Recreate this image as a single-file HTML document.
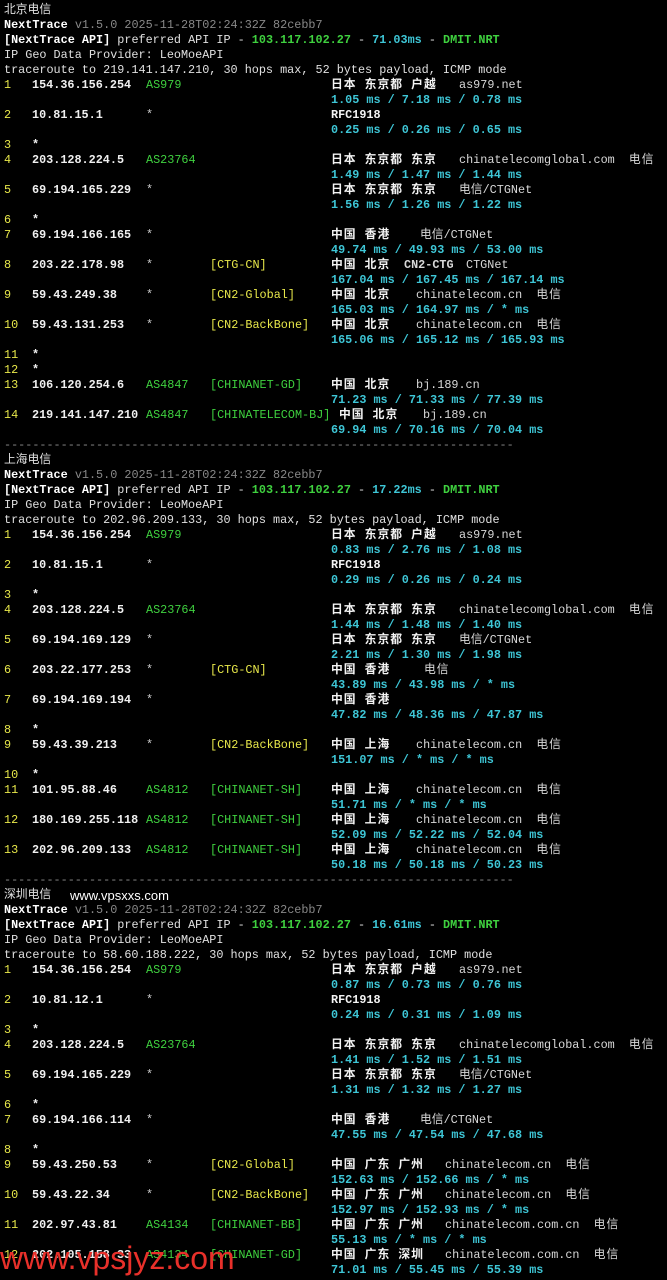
<!DOCTYPE html>
<html><head><meta charset="utf-8"><style>
html,body{margin:0;padding:0;background:#000;}
body{width:667px;height:1280px;position:relative;overflow:hidden;font-family:"Liberation Mono","Noto Sans CJK SC",monospace;font-size:11.8px;color:#e0e0e0;}
.l{position:absolute;left:0;height:15px;line-height:15px;white-space:pre;width:667px;margin-top:1px}
.l span{position:absolute;top:0;line-height:15px}
.l span span,.l span b{position:static}
.p{left:4px}
.n{left:4px;color:#e8e84a}
.i{left:32px;font-weight:bold;color:#f0f0f0}
.a{left:146px;color:#3fd13f}
.s{left:146px;color:#ccc}
.t{left:210px}
.y{color:#e8e84a}
.gr{color:#3fd13f}
.g{left:331px;font-weight:bold;color:#f4f4f4;letter-spacing:1px}
.r{left:331px;font-weight:bold;color:#f4f4f4}
.m{left:331px;font-weight:bold;color:#3ec6d6}
.d{color:#d8d8d8}
.cj{letter-spacing:1px}
.c{color:#3ec6d6}
.k{color:#3fd13f}
.v{color:#888}
b{color:#fff}
.wm{position:absolute;left:0;top:1240px;font-family:"Liberation Sans",sans-serif;font-size:32px;color:#e8302a;line-height:36px}
</style></head><body>
<div class="l" style="top:2px"><span class="p">北京电信</span></div>
<div class="l" style="top:17px"><span class="p"><b>NextTrace</b> <span class="v">v1.5.0 2025-11-28T02:24:32Z 82cebb7</span></span></div>
<div class="l" style="top:32px"><span class="p"><b>[NextTrace API]</b> preferred API IP - <b class="k">103.117.102.27</b> - <b class="c">71.03ms</b> - <b class="k">DMIT.NRT</b></span></div>
<div class="l" style="top:47px"><span class="p">IP Geo Data Provider: LeoMoeAPI</span></div>
<div class="l" style="top:62px"><span class="p">traceroute to 219.141.147.210, 30 hops max, 52 bytes payload, ICMP mode</span></div>
<div class="l" style="top:77px"><span class="n">1</span><span class="i">154.36.156.254</span><span class="a">AS979</span><span class="g">日本 东京都 户越</span><span class="d" style="left:459px">as979.net</span></div>
<div class="l" style="top:92px"><span class="m">1.05 ms / 7.18 ms / 0.78 ms</span></div>
<div class="l" style="top:107px"><span class="n">2</span><span class="i">10.81.15.1</span><span class="s">*</span><span class="r">RFC1918</span></div>
<div class="l" style="top:122px"><span class="m">0.25 ms / 0.26 ms / 0.65 ms</span></div>
<div class="l" style="top:137px"><span class="n">3</span><span class="i">*</span></div>
<div class="l" style="top:152px"><span class="n">4</span><span class="i">203.128.224.5</span><span class="a">AS23764</span><span class="g">日本 东京都 东京</span><span class="d" style="left:459px">chinatelecomglobal.com  <span class="cj">电信</span></span></div>
<div class="l" style="top:167px"><span class="m">1.49 ms / 1.47 ms / 1.44 ms</span></div>
<div class="l" style="top:182px"><span class="n">5</span><span class="i">69.194.165.229</span><span class="s">*</span><span class="g">日本 东京都 东京</span><span class="d" style="left:459px">电信/CTGNet</span></div>
<div class="l" style="top:197px"><span class="m">1.56 ms / 1.26 ms / 1.22 ms</span></div>
<div class="l" style="top:212px"><span class="n">6</span><span class="i">*</span></div>
<div class="l" style="top:227px"><span class="n">7</span><span class="i">69.194.166.165</span><span class="s">*</span><span class="g">中国 香港</span><span class="d" style="left:420px">电信/CTGNet</span></div>
<div class="l" style="top:242px"><span class="m">49.74 ms / 49.93 ms / 53.00 ms</span></div>
<div class="l" style="top:257px"><span class="n">8</span><span class="i">203.22.178.98</span><span class="s">*</span><span class="t y">[CTG-CN]</span><span class="g">中国 北京</span><span class="d" style="left:404px;font-weight:bold">CN2-CTG</span><span class="d" style="left:466px">CTGNet</span></div>
<div class="l" style="top:272px"><span class="m">167.04 ms / 167.45 ms / 167.14 ms</span></div>
<div class="l" style="top:287px"><span class="n">9</span><span class="i">59.43.249.38</span><span class="s">*</span><span class="t y">[CN2-Global]</span><span class="g">中国 北京</span><span class="d" style="left:416px">chinatelecom.cn  <span class="cj">电信</span></span></div>
<div class="l" style="top:302px"><span class="m">165.03 ms / 164.97 ms / * ms</span></div>
<div class="l" style="top:317px"><span class="n">10</span><span class="i">59.43.131.253</span><span class="s">*</span><span class="t y">[CN2-BackBone]</span><span class="g">中国 北京</span><span class="d" style="left:416px">chinatelecom.cn  <span class="cj">电信</span></span></div>
<div class="l" style="top:332px"><span class="m">165.06 ms / 165.12 ms / 165.93 ms</span></div>
<div class="l" style="top:347px"><span class="n">11</span><span class="i">*</span></div>
<div class="l" style="top:362px"><span class="n">12</span><span class="i">*</span></div>
<div class="l" style="top:377px"><span class="n">13</span><span class="i">106.120.254.6</span><span class="a">AS4847</span><span class="t gr">[CHINANET-GD]</span><span class="g">中国 北京</span><span class="d" style="left:416px">bj.189.cn</span></div>
<div class="l" style="top:392px"><span class="m">71.23 ms / 71.33 ms / 77.39 ms</span></div>
<div class="l" style="top:407px"><span class="n">14</span><span class="i">219.141.147.210</span><span class="a">AS4847</span><span class="t gr">[CHINATELECOM-BJ]</span><span class="g" style="left:339px">中国 北京</span><span class="d" style="left:423px">bj.189.cn</span></div>
<div class="l" style="top:422px"><span class="m">69.94 ms / 70.16 ms / 70.04 ms</span></div>
<div class="l" style="top:437px"><span class="p v">------------------------------------------------------------------------</span></div>
<div class="l" style="top:452px"><span class="p">上海电信</span></div>
<div class="l" style="top:467px"><span class="p"><b>NextTrace</b> <span class="v">v1.5.0 2025-11-28T02:24:32Z 82cebb7</span></span></div>
<div class="l" style="top:482px"><span class="p"><b>[NextTrace API]</b> preferred API IP - <b class="k">103.117.102.27</b> - <b class="c">17.22ms</b> - <b class="k">DMIT.NRT</b></span></div>
<div class="l" style="top:497px"><span class="p">IP Geo Data Provider: LeoMoeAPI</span></div>
<div class="l" style="top:512px"><span class="p">traceroute to 202.96.209.133, 30 hops max, 52 bytes payload, ICMP mode</span></div>
<div class="l" style="top:527px"><span class="n">1</span><span class="i">154.36.156.254</span><span class="a">AS979</span><span class="g">日本 东京都 户越</span><span class="d" style="left:459px">as979.net</span></div>
<div class="l" style="top:542px"><span class="m">0.83 ms / 2.76 ms / 1.08 ms</span></div>
<div class="l" style="top:557px"><span class="n">2</span><span class="i">10.81.15.1</span><span class="s">*</span><span class="r">RFC1918</span></div>
<div class="l" style="top:572px"><span class="m">0.29 ms / 0.26 ms / 0.24 ms</span></div>
<div class="l" style="top:587px"><span class="n">3</span><span class="i">*</span></div>
<div class="l" style="top:602px"><span class="n">4</span><span class="i">203.128.224.5</span><span class="a">AS23764</span><span class="g">日本 东京都 东京</span><span class="d" style="left:459px">chinatelecomglobal.com  <span class="cj">电信</span></span></div>
<div class="l" style="top:617px"><span class="m">1.44 ms / 1.48 ms / 1.40 ms</span></div>
<div class="l" style="top:632px"><span class="n">5</span><span class="i">69.194.169.129</span><span class="s">*</span><span class="g">日本 东京都 东京</span><span class="d" style="left:459px">电信/CTGNet</span></div>
<div class="l" style="top:647px"><span class="m">2.21 ms / 1.30 ms / 1.98 ms</span></div>
<div class="l" style="top:662px"><span class="n">6</span><span class="i">203.22.177.253</span><span class="s">*</span><span class="t y">[CTG-CN]</span><span class="g">中国 香港</span><span class="d cj" style="left:424px">电信</span></div>
<div class="l" style="top:677px"><span class="m">43.89 ms / 43.98 ms / * ms</span></div>
<div class="l" style="top:692px"><span class="n">7</span><span class="i">69.194.169.194</span><span class="s">*</span><span class="g">中国 香港</span></div>
<div class="l" style="top:707px"><span class="m">47.82 ms / 48.36 ms / 47.87 ms</span></div>
<div class="l" style="top:722px"><span class="n">8</span><span class="i">*</span></div>
<div class="l" style="top:737px"><span class="n">9</span><span class="i">59.43.39.213</span><span class="s">*</span><span class="t y">[CN2-BackBone]</span><span class="g">中国 上海</span><span class="d" style="left:416px">chinatelecom.cn  <span class="cj">电信</span></span></div>
<div class="l" style="top:752px"><span class="m">151.07 ms / * ms / * ms</span></div>
<div class="l" style="top:767px"><span class="n">10</span><span class="i">*</span></div>
<div class="l" style="top:782px"><span class="n">11</span><span class="i">101.95.88.46</span><span class="a">AS4812</span><span class="t gr">[CHINANET-SH]</span><span class="g">中国 上海</span><span class="d" style="left:416px">chinatelecom.cn  <span class="cj">电信</span></span></div>
<div class="l" style="top:797px"><span class="m">51.71 ms / * ms / * ms</span></div>
<div class="l" style="top:812px"><span class="n">12</span><span class="i">180.169.255.118</span><span class="a">AS4812</span><span class="t gr">[CHINANET-SH]</span><span class="g">中国 上海</span><span class="d" style="left:416px">chinatelecom.cn  <span class="cj">电信</span></span></div>
<div class="l" style="top:827px"><span class="m">52.09 ms / 52.22 ms / 52.04 ms</span></div>
<div class="l" style="top:842px"><span class="n">13</span><span class="i">202.96.209.133</span><span class="a">AS4812</span><span class="t gr">[CHINANET-SH]</span><span class="g">中国 上海</span><span class="d" style="left:416px">chinatelecom.cn  <span class="cj">电信</span></span></div>
<div class="l" style="top:857px"><span class="m">50.18 ms / 50.18 ms / 50.23 ms</span></div>
<div class="l" style="top:872px"><span class="p v">------------------------------------------------------------------------</span></div>
<div class="l" style="top:887px"><span class="p">深圳电信</span><span style="left:70px;font-family:'Liberation Sans',sans-serif;font-size:13px;color:#fff">www.vpsxxs.com</span></div>
<div class="l" style="top:902px"><span class="p"><b>NextTrace</b> <span class="v">v1.5.0 2025-11-28T02:24:32Z 82cebb7</span></span></div>
<div class="l" style="top:917px"><span class="p"><b>[NextTrace API]</b> preferred API IP - <b class="k">103.117.102.27</b> - <b class="c">16.61ms</b> - <b class="k">DMIT.NRT</b></span></div>
<div class="l" style="top:932px"><span class="p">IP Geo Data Provider: LeoMoeAPI</span></div>
<div class="l" style="top:947px"><span class="p">traceroute to 58.60.188.222, 30 hops max, 52 bytes payload, ICMP mode</span></div>
<div class="l" style="top:962px"><span class="n">1</span><span class="i">154.36.156.254</span><span class="a">AS979</span><span class="g">日本 东京都 户越</span><span class="d" style="left:459px">as979.net</span></div>
<div class="l" style="top:977px"><span class="m">0.87 ms / 0.73 ms / 0.76 ms</span></div>
<div class="l" style="top:992px"><span class="n">2</span><span class="i">10.81.12.1</span><span class="s">*</span><span class="r">RFC1918</span></div>
<div class="l" style="top:1007px"><span class="m">0.24 ms / 0.31 ms / 1.09 ms</span></div>
<div class="l" style="top:1022px"><span class="n">3</span><span class="i">*</span></div>
<div class="l" style="top:1037px"><span class="n">4</span><span class="i">203.128.224.5</span><span class="a">AS23764</span><span class="g">日本 东京都 东京</span><span class="d" style="left:459px">chinatelecomglobal.com  <span class="cj">电信</span></span></div>
<div class="l" style="top:1052px"><span class="m">1.41 ms / 1.52 ms / 1.51 ms</span></div>
<div class="l" style="top:1067px"><span class="n">5</span><span class="i">69.194.165.229</span><span class="s">*</span><span class="g">日本 东京都 东京</span><span class="d" style="left:459px">电信/CTGNet</span></div>
<div class="l" style="top:1082px"><span class="m">1.31 ms / 1.32 ms / 1.27 ms</span></div>
<div class="l" style="top:1097px"><span class="n">6</span><span class="i">*</span></div>
<div class="l" style="top:1112px"><span class="n">7</span><span class="i">69.194.166.114</span><span class="s">*</span><span class="g">中国 香港</span><span class="d" style="left:420px">电信/CTGNet</span></div>
<div class="l" style="top:1127px"><span class="m">47.55 ms / 47.54 ms / 47.68 ms</span></div>
<div class="l" style="top:1142px"><span class="n">8</span><span class="i">*</span></div>
<div class="l" style="top:1157px"><span class="n">9</span><span class="i">59.43.250.53</span><span class="s">*</span><span class="t y">[CN2-Global]</span><span class="g">中国 广东 广州</span><span class="d" style="left:445px">chinatelecom.cn  <span class="cj">电信</span></span></div>
<div class="l" style="top:1172px"><span class="m">152.63 ms / 152.66 ms / * ms</span></div>
<div class="l" style="top:1187px"><span class="n">10</span><span class="i">59.43.22.34</span><span class="s">*</span><span class="t y">[CN2-BackBone]</span><span class="g">中国 广东 广州</span><span class="d" style="left:445px">chinatelecom.cn  <span class="cj">电信</span></span></div>
<div class="l" style="top:1202px"><span class="m">152.97 ms / 152.93 ms / * ms</span></div>
<div class="l" style="top:1217px"><span class="n">11</span><span class="i">202.97.43.81</span><span class="a">AS4134</span><span class="t gr">[CHINANET-BB]</span><span class="g">中国 广东 广州</span><span class="d" style="left:445px">chinatelecom.com.cn  <span class="cj">电信</span></span></div>
<div class="l" style="top:1232px"><span class="m">55.13 ms / * ms / * ms</span></div>
<div class="l" style="top:1247px"><span class="n">12</span><span class="i">202.105.158.33</span><span class="a">AS4134</span><span class="t gr">[CHINANET-GD]</span><span class="g">中国 广东 深圳</span><span class="d" style="left:445px">chinatelecom.com.cn  <span class="cj">电信</span></span></div>
<div class="l" style="top:1262px"><span class="m">71.01 ms / 55.45 ms / 55.39 ms</span></div>
<div class="wm">www.vpsjyz.com</div>
</body></html>
